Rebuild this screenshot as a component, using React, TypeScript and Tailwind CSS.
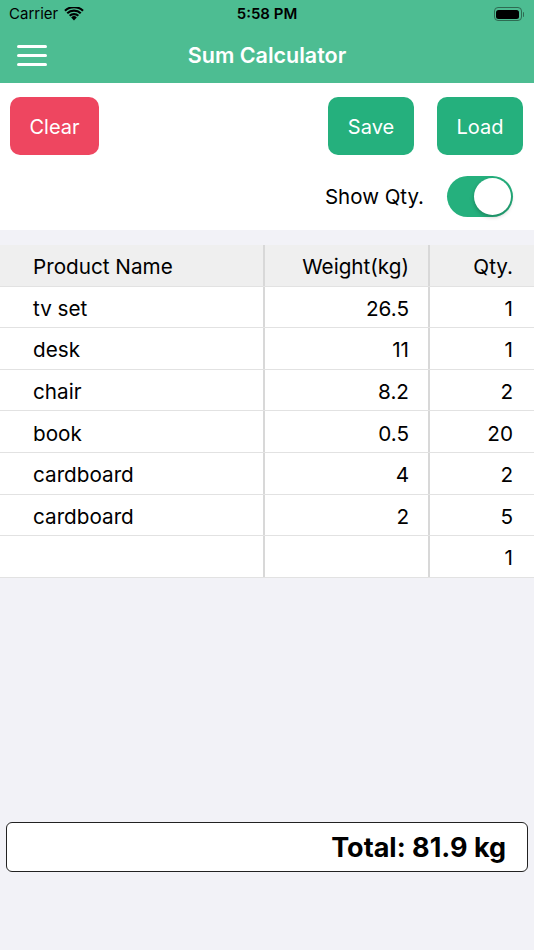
import React from "react";

const rows: [string, string, string][] = [
  ["tv set", "26.5", "1"],
  ["desk", "11", "1"],
  ["chair", "8.2", "2"],
  ["book", "0.5", "20"],
  ["cardboard", "4", "2"],
  ["cardboard", "2", "5"],
  ["", "", "1"],
];

export default function App() {
  return (
    <div
      className="w-[534px] h-[950px] bg-[#f2f2f7] flex flex-col text-black"
      style={{ fontFamily: "Inter, 'Noto Sans', sans-serif" }}
    >
      {/* Header */}
      <div className="bg-[#4dbd92] h-[83px] flex flex-col">
        <div className="h-[28px] flex items-center px-[9px] relative">
          <span className="text-[15px] text-black">Carrier</span>
          <svg className="ml-[6px]" width="20" height="14" viewBox="0 0 20 14">
            <path d="M10 13.5 L7.2 10.4 A4 4 0 0 1 12.8 10.4 Z" fill="#000" />
            <path d="M4.9 8 A7.3 7.3 0 0 1 15.1 8 L13.6 9.6 A5.2 5.2 0 0 0 6.4 9.6 Z" fill="#000" />
            <path d="M2.5 5.5 A10.8 10.8 0 0 1 17.5 5.5 L16 7.1 A8.6 8.6 0 0 0 4 7.1 Z" fill="#000" />
            <path d="M0.2 3 A14.2 14.2 0 0 1 19.8 3 L18.3 4.6 A12 12 0 0 0 1.7 4.6 Z" fill="#000" />
          </svg>
          <span className="absolute left-0 right-0 text-center text-[15px] font-semibold pointer-events-none">
            5:58 PM
          </span>
          <div className="ml-auto flex items-center mr-[1px]">
            <div className="w-[28px] h-[14px] rounded-[4px] border border-[#2e6b52] p-[1.5px]">
              <div className="w-full h-full bg-black rounded-[2.5px]" />
            </div>
            <div className="w-[1.5px] h-[5px] bg-[#2e6b52] rounded-r-sm ml-[1px]" />
          </div>
        </div>
        <div className="flex-1 flex items-center relative">
          <div className="ml-[17px] flex flex-col gap-[6.5px] w-[30px]">
            <div className="h-[2.5px] bg-white rounded-full" />
            <div className="h-[2.5px] bg-white rounded-full" />
            <div className="h-[2.5px] bg-white rounded-full" />
          </div>
          <div className="absolute left-0 right-0 -top-[1px] bottom-0 flex items-center justify-center text-white text-[21.5px] font-semibold">
            Sum Calculator
          </div>
        </div>
      </div>

      {/* Controls */}
      <div className="bg-white h-[147px] flex flex-col">
        <div className="flex items-center pt-[14px] px-[10px]">
          <button className="w-[89px] h-[58px] pt-[2px] rounded-[10px] bg-[#ee4660] text-white text-[20px]">
            Clear
          </button>
          <div className="flex-1" />
          <button className="w-[86px] h-[58px] pt-[2px] rounded-[10px] bg-[#25b07d] text-white text-[20px]">
            Save
          </button>
          <button className="ml-[23px] mr-[1px] w-[86px] h-[58px] pt-[2px] rounded-[10px] bg-[#25b07d] text-white text-[20px]">
            Load
          </button>
        </div>
        <div className="flex items-center justify-end mt-[21px] pr-[21px]">
          <span className="text-[20.5px] mr-[23px] pt-[2px]">Show Qty.</span>
          <div className="w-[66px] h-[41px] rounded-full bg-[#25b07d] flex items-center justify-end pr-[2px]">
            <div className="w-[37px] h-[37px] rounded-full bg-white shadow-[0_2px_4px_rgba(0,0,0,0.25)]" />
          </div>
        </div>
      </div>

      {/* Table */}
      <div className="mt-[15px] bg-white">
        <div className="grid grid-cols-[265px_165px_104px] h-[41.6px] bg-[#efefef] border-b border-[#e2e2e2] text-[20.7px]">
          <div className="flex items-center pt-[2px] pl-[33px] border-r-2 border-[#d8d8d8]">Product Name</div>
          <div className="flex items-center pt-[2px] justify-end pr-[19px] border-r-2 border-[#d8d8d8]">Weight(kg)</div>
          <div className="flex items-center pt-[2px] justify-end pr-[21px]">Qty.</div>
        </div>
        {rows.map((r, i) => (
          <div
            key={i}
            className="grid grid-cols-[265px_165px_104px] h-[41.6px] border-b border-[#e2e2e2] text-[20.7px]"
          >
            <div className="flex items-center pt-[3px] pl-[33px] border-r-2 border-[#d8d8d8]">{r[0]}</div>
            <div className="flex items-center pt-[3px] justify-end pr-[19px] border-r-2 border-[#d8d8d8]">{r[1]}</div>
            <div className="flex items-center pt-[3px] justify-end pr-[21px]">{r[2]}</div>
          </div>
        ))}
      </div>

      <div className="flex-1" />

      {/* Total */}
      <div className="mx-[6px] mb-[78px] h-[50px] pt-[3px] bg-white border-[1.5px] border-[#222] rounded-[6px] flex items-center justify-end pr-[21px]">
        <span className="text-[27px] font-bold">Total: 81.9 kg</span>
      </div>
    </div>
  );
}
